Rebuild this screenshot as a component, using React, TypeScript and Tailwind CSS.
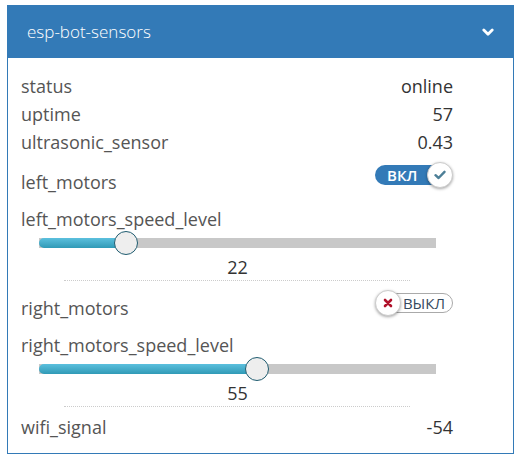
import React from 'react';

const font = { fontFamily: '"Open Sans", "DejaVu Sans", sans-serif' };

const Row = ({ label, value }: { label: string; value: string }) => (
  <div className="flex h-[28px] items-center justify-between">
    <span className="text-[#555]">{label}</span>
    <span className="text-[#333]">{value}</span>
  </div>
);

const Toggle = ({ on }: { on: boolean }) =>
  on ? (
    <div className="relative h-[26px] w-[78px]">
      <div className="absolute left-0 top-[3px] flex h-[20px] w-[72px] items-center rounded-full bg-[#337ab7] pl-[12px] text-[15px] font-semibold leading-none text-white">
        ВКЛ
      </div>
      <div className="absolute right-0 top-0 flex h-[26px] w-[26px] items-center justify-center rounded-full border border-[#ccc] bg-white shadow-[0_1px_3px_rgba(0,0,0,0.35)]">
        <svg width="12" height="10" viewBox="0 0 12 10">
          <path d="M1.5 5.2 L4.6 8 L10.5 1.8" fill="none" stroke="#4d7f97" strokeWidth="2.4" strokeLinecap="round" strokeLinejoin="round" />
        </svg>
      </div>
    </div>
  ) : (
    <div className="relative h-[26px] w-[78px]">
      <div className="absolute right-0 top-[3px] flex h-[20px] w-[74px] items-center justify-end rounded-full border border-[#aaa] bg-white pr-[7px] text-[15px] leading-none text-[#34495e]">
        ВЫКЛ
      </div>
      <div className="absolute left-0 top-0 flex h-[26px] w-[26px] items-center justify-center rounded-full border border-[#ccc] bg-white shadow-[0_1px_3px_rgba(0,0,0,0.35)]">
        <svg width="10" height="10" viewBox="0 0 10 10">
          <path d="M2 2 L8 8 M8 2 L2 8" fill="none" stroke="#b0112a" strokeWidth="2.6" strokeLinecap="round" />
        </svg>
      </div>
    </div>
  );

const Slider = ({ label, value }: { label: string; value: number }) => (
  <div>
    <div className="pt-[11px] leading-[24px] text-[#555]">{label}</div>
    <div className="pl-[18px] pr-[17px]">
      <div className="relative h-[24px]">
        <div className="absolute left-0 right-0 top-[7px] h-[10px] bg-[#c8c8c8]" />
        <div
          className="absolute left-0 top-[7px] h-[10px] rounded-l-full bg-gradient-to-b from-[#5bc0de] to-[#2f9ab6]"
          style={{ width: `${value}%` }}
        />
        <div
          className="absolute top-0 h-[24px] w-[24px] -translate-x-1/2 rounded-full border-[1.5px] border-[#1f5c70] bg-[#eee]"
          style={{ left: `${value}%` }}
        />
      </div>
      <div className="h-[24px] text-center leading-[24px] text-[#333]">{value}</div>
    </div>
    <div className="mx-[43px] mt-px border-t border-dotted border-[#ccc]" />
  </div>
);

export default function App() {
  return (
    <div className="h-[459px] w-[520px] bg-white pl-[7px] pt-[5px]" style={font}>
      <div className="w-[507px] border border-[#337ab7]">
        <div className="flex h-[52px] items-center justify-between bg-[#337ab7] pl-[19px] pr-[19px] text-white">
          <span className="text-[17px] font-light">esp-bot-sensors</span>
          <svg width="12" height="9" viewBox="0 0 12 9">
            <path d="M1.8 2 L6 6.2 L10.2 2" fill="none" stroke="white" strokeWidth="2.8" strokeLinecap="round" strokeLinejoin="round" />
          </svg>
        </div>
        <div className="pb-[12px] pl-[13px] pr-[60px] pt-[14px] text-[18px]">
          <Row label="status" value="online" />
          <Row label="uptime" value="57" />
          <Row label="ultrasonic_sensor" value="0.43" />
          <div className="flex h-[40px] items-start justify-between">
            <span className="mt-[12px] leading-[28px] text-[#555]">left_motors</span>
            <div className="mt-[6px]">
              <Toggle on />
            </div>
          </div>
          <Slider label="left_motors_speed_level" value={22} />
          <div className="flex h-[41px] items-start justify-between">
            <span className="mt-[13px] leading-[28px] text-[#555]">right_motors</span>
            <div className="mt-[9px]">
              <Toggle on={false} />
            </div>
          </div>
          <Slider label="right_motors_speed_level" value={55} />
          <div className="mt-[6px]">
            <Row label="wifi_signal" value="-54" />
          </div>
        </div>
      </div>
    </div>
  );
}
